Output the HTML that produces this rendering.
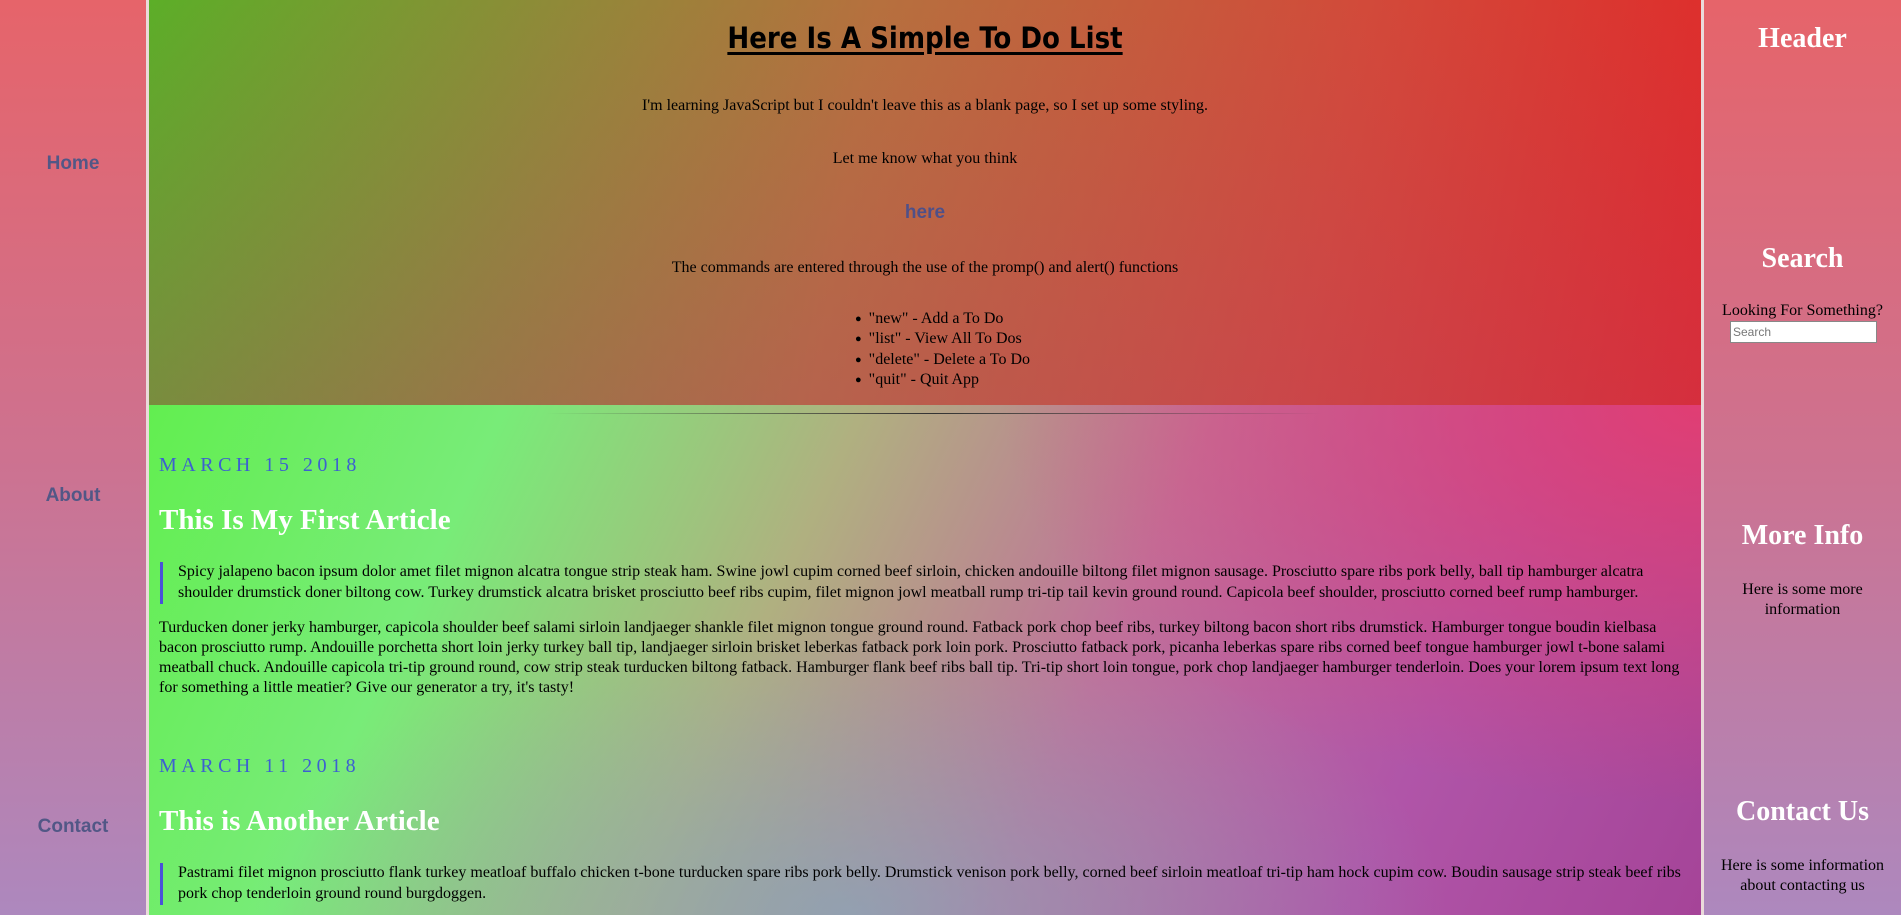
<!DOCTYPE html>
<html><head><meta charset="utf-8"><style>
*{margin:0;padding:0;box-sizing:border-box}
html,body{width:1901px;height:915px;overflow:hidden;font-family:"Liberation Serif",serif;}
.nav{position:absolute;left:0;top:0;width:146px;height:915px;background:linear-gradient(180deg,#e6646a 0%,#cd7290 50%,#ad88be 100%);}
.nav a{position:absolute;left:0;width:146px;text-align:center;font-family:"Liberation Sans",sans-serif;font-weight:bold;font-size:19px;color:#525786;text-decoration:none}
.bl{position:absolute;left:146px;top:0;width:3px;height:915px;background:#eadada}
.br{position:absolute;left:1701px;top:0;width:3px;height:915px;background:#eadada}
.side{position:absolute;left:1704px;top:0;width:197px;height:915px;background:linear-gradient(180deg,#e6646a 0%,#cd7290 50%,#ad88be 100%);text-align:center;color:#000}
.side h2{position:absolute;left:0;width:197px;color:#fff;font-size:28px;font-weight:bold}
.side p{position:absolute;left:0;width:197px;font-size:16px;line-height:20px}
.head{position:absolute;left:149px;top:0;width:1552px;height:405px;background:linear-gradient(180deg,rgba(0,0,0,0) 0%,rgba(180,60,120,.25) 100%),linear-gradient(100deg,#5cae28 0%,#8f8a38 25%,#b6703e 45%,#d24a3a 75%,#e02a2a 100%);text-align:center}
.main{position:absolute;left:149px;top:405px;width:1552px;height:510px;background:radial-gradient(ellipse 600px 300px at 45% 100%,rgba(130,170,190,.7),rgba(130,170,190,0) 100%),radial-gradient(ellipse 700px 400px at 100% 0%,rgba(230,60,110,.9),rgba(230,60,110,0) 100%),linear-gradient(115deg,#62ee50 0%,#78ec78 20%,#b0b080 40%,#c0709a 60%,#b055a8 80%,#a54498 100%)}
.t{position:absolute;left:0;width:1552px;text-align:center;font-size:16px}
h1{position:absolute;left:0;width:1552px;top:21px;font-family:"DejaVu Sans Condensed","Liberation Sans",sans-serif;font-size:29px;font-weight:bold;text-align:center}
h1 span{text-decoration:underline;text-decoration-thickness:3px;text-underline-offset:4px}
.hr{position:absolute;left:397px;top:8px;width:776px;height:1px;background:linear-gradient(90deg,rgba(0,0,0,0),#333 50%,rgba(0,0,0,0))}
.date{position:absolute;left:10px;font-size:20px;letter-spacing:4.5px;color:#3d60d0}
.title{position:absolute;left:10px;font-size:29px;font-weight:bold;color:#fff}
.bq{position:absolute;left:11px;width:1530px;height:42px;border-left:3px solid #4a52d8;padding-left:15px}
.s{font-size:16px;line-height:20.5px;white-space:nowrap}
.p{position:absolute;left:10px;width:1532px}
ul{position:absolute;left:706px;top:309px;text-align:left;font-size:16px;line-height:20.3px;list-style:none}
ul li:before{content:"●";font-size:11px;margin-right:7px;vertical-align:1px}
</style></head><body>
<div class="nav">
<a style="top:153px">Home</a><a style="top:485px">About</a><a style="top:816px">Contact</a>
</div>
<div class="bl"></div><div class="br"></div>
<div class="head">
<h1><span>Here Is A Simple To Do List</span></h1>
<div class="t" style="top:97px">I'm learning JavaScript but I couldn't leave this as a blank page, so I set up some styling.</div>
<div class="t" style="top:150px">Let me know what you think</div>
<div class="t" style="top:202px;font-family:'Liberation Sans',sans-serif;font-weight:bold;font-size:19px;color:#4f5088">here</div>
<div class="t" style="top:259px">The commands are entered through the use of the promp() and alert() functions</div>
<ul><li>"new" - Add a To Do</li><li>"list" - View All To Dos</li><li>"delete" - Delete a To Do</li><li>"quit" - Quit App</li></ul>
</div>
<div class="main">
<div class="hr"></div>
<div class="date" style="top:49px">MARCH 15 2018</div>
<div class="title" style="top:99px">This Is My First Article</div>
<div class="bq" style="top:157px"><div class="s">Spicy jalapeno bacon ipsum dolor amet filet mignon alcatra tongue strip steak ham. Swine jowl cupim corned beef sirloin, chicken andouille biltong filet mignon sausage. Prosciutto spare ribs pork belly, ball tip hamburger alcatra<br>shoulder drumstick doner biltong cow. Turkey drumstick alcatra brisket prosciutto beef ribs cupim, filet mignon jowl meatball rump tri-tip tail kevin ground round. Capicola beef shoulder, prosciutto corned beef rump hamburger.</div></div>
<div class="p" style="top:213px"><div class="s" style="line-height:20px">Turducken doner jerky hamburger, capicola shoulder beef salami sirloin landjaeger shankle filet mignon tongue ground round. Fatback pork chop beef ribs, turkey biltong bacon short ribs drumstick. Hamburger tongue boudin kielbasa<br>bacon prosciutto rump. Andouille porchetta short loin jerky turkey ball tip, landjaeger sirloin brisket leberkas fatback pork loin pork. Prosciutto fatback pork, picanha leberkas spare ribs corned beef tongue hamburger jowl t-bone salami<br>meatball chuck. Andouille capicola tri-tip ground round, cow strip steak turducken biltong fatback. Hamburger flank beef ribs ball tip. Tri-tip short loin tongue, pork chop landjaeger hamburger tenderloin. Does your lorem ipsum text long<br>for something a little meatier? Give our generator a try, it's tasty!</div></div>
<div class="date" style="top:350px">MARCH 11 2018</div>
<div class="title" style="top:400px">This is Another Article</div>
<div class="bq" style="top:458px"><div class="s">Pastrami filet mignon prosciutto flank turkey meatloaf buffalo chicken t-bone turducken spare ribs pork belly. Drumstick venison pork belly, corned beef sirloin meatloaf tri-tip ham hock cupim cow. Boudin sausage strip steak beef ribs<br>pork chop tenderloin ground round burgdoggen.</div></div>
</div>
<div class="side">
<h2 style="top:23px">Header</h2>
<h2 style="top:243px">Search</h2>
<p style="top:301px">Looking For Something?</p>
<div style="position:absolute;left:26px;top:321px;width:147px;height:22px;background:#fff;border:1px solid #888;text-align:left;font-family:'Liberation Sans',sans-serif;font-size:12px;color:#777;padding:3px 2px">Search</div>
<h2 style="top:520px">More Info</h2>
<p style="top:580px">Here is some more<br>information</p>
<h2 style="top:796px">Contact Us</h2>
<p style="top:856px">Here is some information<br>about contacting us</p>
</div>
</body></html>
